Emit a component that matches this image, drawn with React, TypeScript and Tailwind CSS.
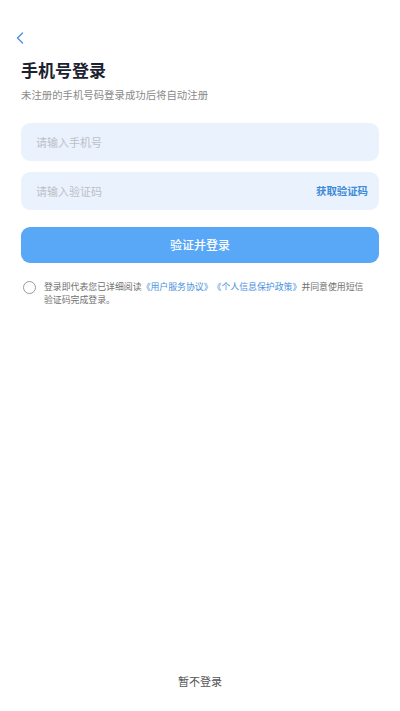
import React from "react";

export default function App() {
  const font = { fontFamily: '"Noto Sans CJK SC", "Noto Sans", sans-serif' };
  return (
    <div className="w-[400px] h-[711px] bg-white flex flex-col" style={font}>
      <div className="h-[29px]" />
      <div className="pl-[16px] h-[18px] flex items-center">
        <svg width="8" height="12" viewBox="0 0 8 12" fill="none">
          <path d="M6.5 1 L1.5 6 L6.5 11" stroke="#4a90dd" strokeWidth="1.4" strokeLinecap="round" strokeLinejoin="round" />
        </svg>
      </div>
      <div className="px-[21px] flex flex-col">
        <div className="mt-[12px] text-[17px] leading-[22px] font-bold text-[#1c2230]">手机号登录</div>
        <div className="mt-[7px] text-[10.4px] leading-[14px] text-[#8a8a8a]">未注册的手机号码登录成功后将自动注册</div>
        <div className="mt-[21px] h-[38px] rounded-[9px] bg-[#eaf2fe] flex items-center px-[15px]">
          <span className="text-[11px] text-[#bcc0c6]">请输入手机号</span>
        </div>
        <div className="mt-[11px] h-[38px] rounded-[9px] bg-[#eaf2fe] flex items-center justify-between pl-[15px] pr-[11px]">
          <span className="text-[11px] text-[#bcc0c6]">请输入验证码</span>
          <span className="text-[10.4px] font-semibold text-[#3d8ad8]">获取验证码</span>
        </div>
        <div className="mt-[17px] h-[36px] rounded-[9px] bg-[#59a7f7] flex items-center justify-center">
          <span className="text-[12px] font-medium text-white">验证并登录</span>
        </div>
        <div className="mt-[17px] flex items-start">
          <div className="ml-[2px] mt-[1px] w-[13px] h-[13px] rounded-full border border-[#9a9a9a] shrink-0" />
          <p className="ml-[8px] w-[325px] text-[8.9px] leading-[13px] text-[#707070] [text-spacing-trim:space-all]">
            登录即代表您已详细阅读<span className="text-[#4a90dd]">《用户服务协议》《个人信息保护政策》</span>并同意使用短信验证码完成登录。
          </p>
        </div>
      </div>
      <div className="flex-1" />
      <div className="pb-[22px] flex justify-center">
        <span className="text-[11px] text-[#555]">暂不登录</span>
      </div>
    </div>
  );
}
